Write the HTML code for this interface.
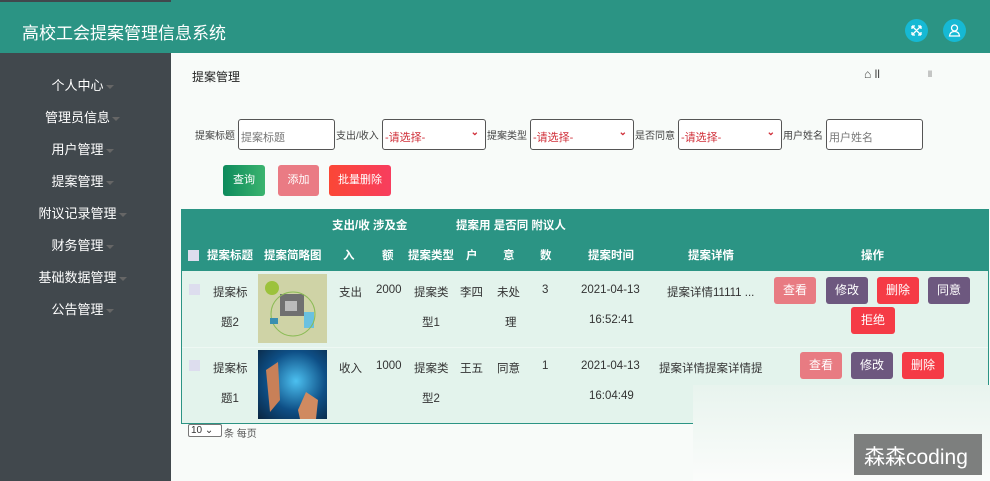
<!DOCTYPE html>
<html><head><meta charset="utf-8"><style>
*{margin:0;padding:0;box-sizing:border-box}
body{width:990px;height:481px;overflow:hidden;background:#f8fbf9;font-family:"Liberation Sans","Noto Sans CJK SC",sans-serif;position:relative;font-size:12px;color:#333}
.a{position:absolute;white-space:nowrap}
.hdr{left:0;top:0;width:990px;height:53px;background:#2b9484}
.side{left:0;top:53px;width:171px;height:428px;background:#41484d}
.mi{color:#fff;font-size:13px;width:165px;text-align:center;left:0}
.mi i{display:inline-block;width:0;height:0;border-left:4px solid transparent;border-right:4px solid transparent;border-top:4px solid #666;vertical-align:middle;margin-left:2px}
.lbl{font-size:10px;color:#444}
.inp{border:1px solid #555;border-radius:3px;height:31px;background:#fff;font-size:11px;padding:9px 2px;color:#777}
.sel{color:#d0303a}
.sel b{position:absolute;right:6px;top:7px;color:#d0303a;font-size:10px;font-weight:bold}
.btn{height:31px;border-radius:3px;color:#fff;font-size:11px;text-align:center;line-height:31px}
.th{color:#fff;font-weight:bold;font-size:11.5px}
.td{font-size:11.5px;color:#333;margin-top:2px}
.ob{width:42px;height:27px;border-radius:3px;color:#fff;font-size:12px;text-align:center;line-height:27px}
.pk{background:#e87b82}.pu{background:#6d587f}.rd{background:#f53b46}
.cb{width:11px;height:11px;background:#dde}
</style></head><body>
<div class="a hdr"></div>
<div class="a" style="left:0;top:0;width:171px;height:2px;background:#41484d"></div>
<div class="a" style="left:22px;top:19px;color:#fff;font-size:17px">高校工会提案管理信息系统</div>
<div class="a" style="left:905px;top:19px;width:23px;height:23px;border-radius:50%;background:#16b9d4"><svg width="23" height="23" fill="none" stroke="#fff" stroke-width="1.3"><path d="M7 7 L16 16 M16 7 L7 16 M7 7 h3 M7 7 v3 M16 7 h-3 M16 7 v3 M7 16 h3 M7 16 v-3 M16 16 h-3 M16 16 v-3"/></svg></div>
<div class="a" style="left:943px;top:19px;width:23px;height:23px;border-radius:50%;background:#16b9d4"><svg width="23" height="23"><circle cx="11.5" cy="9" r="3" fill="none" stroke="#fff" stroke-width="1.3"/><path d="M6.5 17 Q7 12.5 11.5 12.5 Q16 12.5 16.5 17 Z" fill="none" stroke="#fff" stroke-width="1.3"/></svg></div>
<div class="a side"></div>
<div class="a mi" style="top:75px">个人中心<i></i></div>
<div class="a mi" style="top:107px">管理员信息<i></i></div>
<div class="a mi" style="top:139px">用户管理<i></i></div>
<div class="a mi" style="top:171px">提案管理<i></i></div>
<div class="a mi" style="top:203px">附议记录管理<i></i></div>
<div class="a mi" style="top:235px">财务管理<i></i></div>
<div class="a mi" style="top:267px">基础数据管理<i></i></div>
<div class="a mi" style="top:299px">公告管理<i></i></div>

<div class="a" style="left:192px;top:68px;font-size:12px;color:#222">提案管理</div>
<div class="a" style="left:864px;top:67px;font-size:12px;color:#444">⌂ ll</div>
<div class="a" style="left:928px;top:69px;font-size:9px;color:#777">ll</div>

<div class="a lbl" style="left:195px;top:127px">提案标题</div>
<div class="a inp" style="left:238px;top:119px;width:97px">提案标题</div>
<div class="a lbl" style="left:336px;top:127px">支出/收入</div>
<div class="a inp sel" style="left:382px;top:119px;width:104px">-请选择-<b>⌄</b></div>
<div class="a lbl" style="left:487px;top:127px">提案类型</div>
<div class="a inp sel" style="left:530px;top:119px;width:104px">-请选择-<b>⌄</b></div>
<div class="a lbl" style="left:635px;top:127px">是否同意</div>
<div class="a inp sel" style="left:678px;top:119px;width:104px">-请选择-<b>⌄</b></div>
<div class="a lbl" style="left:783px;top:127px">用户姓名</div>
<div class="a inp" style="left:826px;top:119px;width:97px">用户姓名</div>

<div class="a btn" style="left:223px;top:165px;width:42px;background:linear-gradient(90deg,#0d8a5c,#3bb46f)">查询</div>
<div class="a btn" style="left:278px;top:165px;width:41px;background:#ea7b84">添加</div>
<div class="a btn" style="left:329px;top:165px;width:62px;background:linear-gradient(90deg,#fb4736,#f83d5e)">批量删除</div>

<div class="a" style="left:181px;top:209px;width:808px;height:215px;background:#e3f3ec;border:1px solid #2b9484;border-top:none"></div>
<div class="a" style="left:181px;top:209px;width:808px;height:62px;background:#2b9484"></div>
<div class="a" style="left:182px;top:347px;width:806px;height:1px;background:#eef8f3"></div>
<div class="a th" style="left:332px;top:217px">支出/收 涉及金</div>
<div class="a th" style="left:456px;top:217px">提案用 是否同 附议人</div>
<div class="a" style="left:188px;top:250px;width:11px;height:11px;background:#dde"></div>
<div class="a th" style="left:207px;top:247px">提案标题</div>
<div class="a th" style="left:264px;top:247px">提案简略图</div>
<div class="a th" style="left:343px;top:247px">入</div>
<div class="a th" style="left:382px;top:247px">额</div>
<div class="a th" style="left:408px;top:247px">提案类型</div>
<div class="a th" style="left:466px;top:247px">户</div>
<div class="a th" style="left:503px;top:247px">意</div>
<div class="a th" style="left:540px;top:247px">数</div>
<div class="a th" style="left:588px;top:247px">提案时间</div>
<div class="a th" style="left:688px;top:247px">提案详情</div>
<div class="a th" style="left:861px;top:247px">操作</div>

<div class="a cb" style="left:189px;top:284px"></div>
<div class="a td" style="left:213px;top:282px">提案标</div>
<div class="a td" style="left:221px;top:312px">题2</div>
<div class="a" style="left:258px;top:274px;width:69px;height:69px;background:#cfd3a6"><svg width="69" height="69"><circle cx="14" cy="14" r="7" fill="#9cc23c"/><rect x="22" y="20" width="24" height="22" fill="#707070"/><rect x="27" y="27" width="12" height="10" fill="#bbb"/><rect x="46" y="38" width="10" height="16" fill="#6ac1e0"/><circle cx="35" cy="40" r="22" fill="none" stroke="#8bbb55" stroke-width="1"/><rect x="12" y="44" width="8" height="6" fill="#3a8fb0"/></svg></div>
<div class="a td" style="left:339px;top:282px">支出</div>
<div class="a td" style="left:376px;top:282px">2000</div>
<div class="a td" style="left:414px;top:282px">提案类</div>
<div class="a td" style="left:422px;top:312px">型1</div>
<div class="a td" style="left:460px;top:282px">李四</div>
<div class="a td" style="left:497px;top:282px">未处</div>
<div class="a td" style="left:505px;top:312px">理</div>
<div class="a td" style="left:542px;top:282px">3</div>
<div class="a td" style="left:581px;top:282px">2021-04-13</div>
<div class="a td" style="left:589px;top:312px">16:52:41</div>
<div class="a td" style="left:667px;top:282px">提案详情11111 ...</div>
<div class="a ob pk" style="left:774px;top:277px">查看</div>
<div class="a ob pu" style="left:826px;top:277px">修改</div>
<div class="a ob rd" style="left:877px;top:277px">删除</div>
<div class="a ob pu" style="left:928px;top:277px">同意</div>
<div class="a ob rd" style="left:851px;top:307px;width:44px">拒绝</div>

<div class="a cb" style="left:189px;top:360px"></div>
<div class="a td" style="left:213px;top:358px">提案标</div>
<div class="a td" style="left:221px;top:388px">题1</div>
<div class="a" style="left:258px;top:350px;width:69px;height:69px;background:radial-gradient(circle at 55% 45%,#4cc0f0,#0e4f86 55%,#0a2540)"><svg width="69" height="69"><path d="M8 20 L20 12 L22 50 L12 62 Z" fill="#c88058"/><path d="M40 60 L48 42 L60 50 L58 69 L42 69 Z" fill="#d08a60"/></svg></div>
<div class="a td" style="left:339px;top:358px">收入</div>
<div class="a td" style="left:376px;top:358px">1000</div>
<div class="a td" style="left:414px;top:358px">提案类</div>
<div class="a td" style="left:422px;top:388px">型2</div>
<div class="a td" style="left:460px;top:358px">王五</div>
<div class="a td" style="left:497px;top:358px">同意</div>
<div class="a td" style="left:542px;top:358px">1</div>
<div class="a td" style="left:581px;top:358px">2021-04-13</div>
<div class="a td" style="left:589px;top:388px">16:04:49</div>
<div class="a td" style="left:659px;top:358px">提案详情提案详情提</div>
<div class="a ob pk" style="left:800px;top:352px">查看</div>
<div class="a ob pu" style="left:851px;top:352px">修改</div>
<div class="a ob rd" style="left:902px;top:352px">删除</div>

<div class="a" style="left:693px;top:385px;width:297px;height:96px;background:linear-gradient(180deg,#e8f4ee,#fbfcfb)"></div>
<div class="a" style="left:188px;top:424px;width:34px;height:13px;border:1px solid #777;border-radius:2px;font-size:10px;background:#fff;padding-left:2px;line-height:11px">10 ⌄</div>
<div class="a" style="left:224px;top:425px;font-size:10px;color:#555">条 每页</div>
<div class="a" style="left:854px;top:434px;width:128px;height:41px;background:#7d7f7e"></div>
<div class="a" style="left:864px;top:441px;color:#fff;font-size:21px">森森coding</div>
</body></html>
